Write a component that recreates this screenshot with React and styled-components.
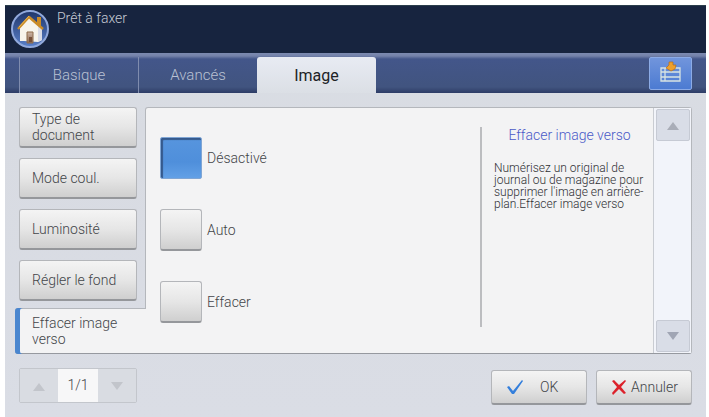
import React, { useState } from 'react'
import styled, { createGlobalStyle } from 'styled-components'

const GlobalStyle = createGlobalStyle`
  * {
    box-sizing: border-box;
  }
  body {
    background: #fff;
    color: #434549;
    font-family: Roboto, "Liberation Sans", sans-serif;
    font-size: 14px;
    font-weight: 300;
    margin: 0;
  }
  button, input {
    color: inherit;
    font: inherit;
    margin: 0;
    padding: 0;
  }
  svg {
    flex-shrink: 0;
  }
`
const Screen = styled.div`
  background: linear-gradient(#dbe0e6, #d8dbe2 30%, #dadde5);
  display: flex;
  flex-direction: column;
  margin: 5px 3px 0 5px;
  min-height: calc(100vh - 6px);
`
const Header = styled.header`
  background: #17243f;
  border-top: 1px solid #2b3e4c;
  color: #c3c8d2;
  display: flex;
  gap: 8px;
  height: 48px;
  padding: 3px 6px;
`
const HomeButton = styled.button`
  background: none;
  border: none;
  height: 40px;
  width: 38px;
`
const Status = styled.div`
  line-height: 18px;
`
const TabBar = styled.nav`
  background: linear-gradient(#7c8ab0, #7482aa 3px, #43568a 6px, #41547f 34px, #2d3c66);
  display: flex;
  height: 40px;
  padding: 4px 14px 0;
`
const Tab = styled.button`
  background: ${props => props.$active ? 'linear-gradient(#e8ebf3, #dbdfe5)' : 'none'};
  border: none;
  border-left: ${props => props.$active ? 'none' : '1px solid #7f8cae'};
  border-radius: ${props => props.$active ? '3px 3px 0 0' : '0'};
  color: ${props => props.$active ? '#202226' : '#b9c1d3'};
  font-size: ${props => props.$active ? 16 : 15}px;
  font-weight: ${props => props.$active ? 400 : 300};
  height: 36px;
  width: 119px;
`
const ListButton = styled.button`
  background: linear-gradient(#7195dc, #4c7bd2);
  border: 1px solid #8cabe6;
  border-radius: 2px;
  height: 33px;
  margin-left: auto;
  width: 43px;
`
const Content = styled.main`
  display: flex;
  padding: 14px 14px 0 10px;
`
const Sidebar = styled.div`
  display: flex;
  flex-direction: column;
  justify-content: space-between;
  position: relative;
  width: 131px;
  z-index: 1;
`
const SideList = styled.div`
  display: flex;
  flex-direction: column;
  gap: 10px;
  padding: 0 9px 0 4px;
`
const raised = `
  background: linear-gradient(#f4f4f4, #e6e6e6 50%, #cfcfcf);
  border: 1px solid #b4b6ba;
  border-bottom: 2px solid #95979b;
  border-radius: 3px;
`
const SideButton = styled.button`
  ${raised}
  height: 41px;
  line-height: 16px;
  padding: 0 12px;
  text-align: left;
`
const ActiveSideButton = styled.button`
  background: #f3f3f4;
  border: none;
  border-radius: 3px 0 0 3px;
  box-shadow: inset 5px 0 #4a86cf, inset 0 1px #b4b7bc, inset 0 -1px #96999f;
  height: 46px;
  line-height: 16px;
  padding: 0 12px 0 17px;
  text-align: left;
`
const Panel = styled.section`
  background: #f3f3f4;
  border: 1px solid #b4b7bc;
  border-bottom-color: #96999f;
  border-radius: 3px 3px 3px 0;
  display: flex;
  flex: 1;
  height: 247px;
  margin-left: -1px;
`
const Options = styled.div`
  display: flex;
  flex: 1;
  flex-direction: column;
  gap: 30px;
  padding: 29px 14px;
`
const Option = styled.label`
  align-items: center;
  display: flex;
  gap: 5px;
`
const Radio = styled.input`
  ${raised}
  appearance: none;
  height: 42px;
  width: 42px;
  &:checked {
    background: linear-gradient(#5795de, #4f8fdb 60%, #62a0e6);
    border: 1px solid #7fa5d4;
    border-radius: 2px;
    box-shadow: inset 2px 2px 1px #35598c;
  }
`
const Help = styled.aside`
  border-left: 2px solid #bcbdc0;
  margin: 19px 8px 26px 0;
  padding: 0 0 0 12px;
  width: 165px;
`
const HelpTitle = styled.h2`
  color: #4a5ac8;
  font-size: 14px;
  font-weight: 300;
  line-height: 16px;
  margin: 0 0 19px;
  text-align: center;
`
const HelpText = styled.p`
  color: #303134;
  font-size: 12px;
  line-height: 12px;
  margin: 0;
`
const Scrollbar = styled.div`
  background: #f2f4fa;
  border-left: 1px solid #c9ccd2;
  display: flex;
  flex-direction: column;
  justify-content: space-between;
  padding: 1px 1px 1px 2px;
`
const ScrollButton = styled.button`
  background: #d9dde7;
  border: 1px solid #c6cad4;
  border-radius: 2px;
  height: 32px;
  width: 34px;
`
const Footer = styled.footer`
  display: flex;
  gap: 9px;
  padding: 14px 14px 12px;
`
const Pager = styled.div`
  border: 1px solid #c3c6cc;
  border-radius: 2px;
  display: flex;
  height: 35px;
  margin-right: auto;
`
const PagerButton = styled.button`
  background: #d9dce2;
  border: none;
  width: 38px;
`
const PageCount = styled.div`
  background: #f7f7f8;
  line-height: 33px;
  text-align: center;
  width: 40px;
`
const ActionButton = styled.button`
  ${raised}
  align-items: center;
  display: flex;
  gap: ${props => props.$gap}px;
  height: 35px;
  margin-top: 2px;
  padding: 0 14px;
  width: 96px;
`

const settings = ['Type de document', 'Mode coul.', 'Luminosité', 'Régler le fond']
const options = ['Désactivé', 'Auto', 'Effacer']

const HomeIcon = () => (
  <svg width='38' height='40' viewBox='0 0 38 40'>
    <defs>
      <linearGradient id='disc' x2='0' y2='1'>
        <stop offset='0' stopColor='#1f3569' />
        <stop offset='1' stopColor='#5a80c9' />
      </linearGradient>
      <linearGradient id='door' x2='0' y2='1'>
        <stop offset='0' stopColor='#cdb4a4' />
        <stop offset='1' stopColor='#8a6a55' />
      </linearGradient>
    </defs>
    <circle cx='19' cy='20' r='18' fill='url(#disc)' stroke='#91a9dc' strokeWidth='2' />
    <path d='M26 8h4v10l-4-3z' fill='#c98b27' />
    <path d='M18 8 9 18v14h4l14 1 4-2V19z' fill='#f7f4ec' />
    <path d='M27 16l4 4v11l-4 2z' fill='#d8dbe6' />
    <path d='M7 20 18 8l14 12' fill='none' stroke='#c98b27' strokeWidth='2.4' strokeLinejoin='round' />
    <path d='M8 18 18 7' stroke='#e8b452' strokeWidth='1' />
    <path d='M16 23h6v11h-6z' fill='url(#door)' stroke='#8c6a4a' />
    <path d='M18 28h3v5h-3z' fill='#775039' />
  </svg>
)

const ListIcon = () => (
  <svg width='23' height='22' viewBox='0 0 23 22'>
    <path d='M2 7h19v13H2zM2 11h19M2 16h19M6 7v13' fill='none' stroke='#d7e3e2' strokeWidth='1.3' />
    <path d='M10 1h4v3h3l-1 4-4 2-5-3 3-3z' fill='#eda02c' stroke='#b96f16' strokeWidth='.7' />
  </svg>
)

const Arrow = ({ down, color }) => (
  <svg width='14' height='9' viewBox='0 0 14 9'>
    <path d={down ? 'M1 0h12L7 8z' : 'M1 9h12L7 1z'} fill={color} />
  </svg>
)

const CheckIcon = () => (
  <svg width='18' height='18' viewBox='0 0 18 18'>
    <path d='M1 9 3 8l4 5L16 2l1 1L8 16H6z' fill='#347fdc' />
  </svg>
)

const CrossIcon = () => (
  <svg width='16' height='16' viewBox='0 0 16 16'>
    <path d='M1 2 3 1l5 5 6-5 1 1-5 6 5 6-2 1-5-5-6 6-1-2 5-6z' fill='#dc222b' />
  </svg>
)

function App () {
  const [selected, setSelected] = useState(options[0])

  return (
    <>
      <GlobalStyle />
      <Screen>
        <Header>
          <HomeButton aria-label='Accueil'><HomeIcon /></HomeButton>
          <Status>Prêt à faxer</Status>
        </Header>
        <TabBar>
          <Tab>Basique</Tab>
          <Tab>Avancés</Tab>
          <Tab $active>Image</Tab>
          <ListButton aria-label='Liste'><ListIcon /></ListButton>
        </TabBar>
        <Content>
          <Sidebar>
            <SideList>
              {settings.map(name => <SideButton key={name}>{name}</SideButton>)}
            </SideList>
            <ActiveSideButton>Effacer image verso</ActiveSideButton>
          </Sidebar>
          <Panel>
            <Options>
              {options.map(name => (
                <Option key={name}>
                  <Radio
                    type='radio'
                    name='erase'
                    checked={selected === name}
                    onChange={() => setSelected(name)}
                  />
                  {name}
                </Option>
              ))}
            </Options>
            <Help>
              <HelpTitle>Effacer image verso</HelpTitle>
              <HelpText>
                Numérisez un original de journal ou de magazine pour supprimer l'image en arrière-plan.Effacer image verso
              </HelpText>
            </Help>
            <Scrollbar>
              <ScrollButton aria-label='Haut'><Arrow color='#a9adb8' /></ScrollButton>
              <ScrollButton aria-label='Bas'><Arrow down color='#a0a5b4' /></ScrollButton>
            </Scrollbar>
          </Panel>
        </Content>
        <Footer>
          <Pager>
            <PagerButton aria-label='Page précédente'><Arrow color='#c2c5cb' /></PagerButton>
            <PageCount>1/1</PageCount>
            <PagerButton aria-label='Page suivante'><Arrow down color='#c2c5cb' /></PagerButton>
          </Pager>
          <ActionButton $gap={16}><CheckIcon />OK</ActionButton>
          <ActionButton $gap={4}><CrossIcon />Annuler</ActionButton>
        </Footer>
      </Screen>
    </>
  )
}

export default App
